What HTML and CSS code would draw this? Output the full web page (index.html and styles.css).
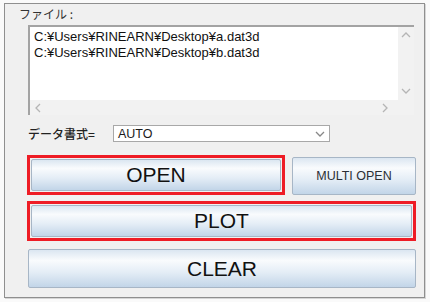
FILE: index.html
```html
<!DOCTYPE html>
<html lang="ja">

<head>
    <meta charset="UTF-8">
    <title>RINEARN Graph 3D - File</title>
    <link rel="stylesheet" href="styles.css">
</head>

<body>
    <div class="panel">
        <div class="title">ファイル :</div>

        <!-- ファイル一覧 -->
        <div class="list">
            <div class="list-body">
                <div class="list-item">C:¥Users¥RINEARN¥Desktop¥a.dat3d</div>
                <div class="list-item">C:¥Users¥RINEARN¥Desktop¥b.dat3d</div>
            </div>
            <div class="vscroll">
                <svg width="10" height="6" viewBox="0 0 10 6"><polyline points="1,5 5,1 9,5" /></svg>
                <svg width="10" height="6" viewBox="0 0 10 6"><polyline points="1,1 5,5 9,1" /></svg>
            </div>
            <div class="hscroll">
                <svg width="6" height="10" viewBox="0 0 6 10"><polyline points="5,1 1,5 5,9" /></svg>
                <svg width="6" height="10" viewBox="0 0 6 10"><polyline points="1,1 5,5 1,9" /></svg>
            </div>
            <div class="corner"></div>
        </div>

        <div class="format-row">
            <span class="format-label">データ書式=</span>
            <div class="combo">
                <span>AUTO</span>
                <svg width="10" height="6" viewBox="0 0 10 6"><polyline points="1,1 5,5 9,1" /></svg>
            </div>
        </div>

        <div class="row open-row">
            <div class="mark open-mark">
                <button class="btn btn-big">OPEN</button>
            </div>
            <button class="btn btn-small">MULTI OPEN</button>
        </div>

        <div class="mark plot-mark">
            <button class="btn btn-big">PLOT</button>
        </div>

        <button class="btn btn-big clear">CLEAR</button>
    </div>
</body>

</html>
```

FILE: styles.css
```css
* {
    margin: 0;
    padding: 0;
    box-sizing: border-box;
}

html, body {
    height: 100%;
    overflow: hidden;
}

body {
    background: #fafafa;
    font-family: "Liberation Sans", "Noto Sans CJK JP", Arial, sans-serif;
    color: #1a1a1a;
}

.panel {
    margin: 3px 0 0 4px;
    width: 421px;
    height: 295px;
    border: 1px solid #8f8f8f;
    box-shadow: 1px 1px 0 #d6d6d6;
    background: #f0f0f0;
    padding: 0 7px 0 22px;
}

.title {
    margin-left: -8px;
    height: 21px;
    line-height: 20px;
    font-size: 12px;
    font-family: "Noto Sans CJK JP", sans-serif;
    color: #333;
}

/* ファイル一覧 */
.list {
    margin-left: 1px;
    width: 386px;
    height: 90px;
    border-top: 2px solid #a3a3a3;
    border-left: 2px solid #a3a3a3;
    display: grid;
    grid-template-columns: 1fr 16px;
    grid-template-rows: 1fr 15px;
    background: #f2f2f2;
}

.list-body {
    background: #fff;
    padding: 2px 0 0 4px;
}

.list-item {
    font-size: 13px;
    line-height: 16px;
    color: #111;
}

.vscroll {
    display: flex;
    flex-direction: column;
    justify-content: space-between;
    align-items: center;
    padding: 5px 0 6px;
}

.hscroll {
    display: flex;
    justify-content: space-between;
    align-items: center;
    padding: 0 10px 0 5px;
}

.list svg polyline,
.combo svg polyline {
    fill: none;
    stroke: #b5b5b5;
    stroke-width: 1.3;
}

.format-row {
    margin-top: 10px;
    height: 17px;
    display: flex;
    align-items: center;
    padding-left: 1px;
}

.format-label {
    width: 85px;
    font-size: 12px;
    font-family: "Noto Sans CJK JP", sans-serif;
    font-weight: 500;
    color: #222;
}

.combo {
    width: 217px;
    height: 17px;
    border: 1px solid #a8a8a8;
    background: #fff;
    display: flex;
    align-items: center;
    justify-content: space-between;
    padding: 0 4px 0 4px;
    font-size: 12.5px;
}

.combo svg polyline {
    stroke: #888;
}

/* ボタン */
.row {
    display: flex;
}

.open-row {
    margin-top: 13px;
    height: 40px;
    gap: 7px;
}

.mark {
    border: 3px solid #ee1c25;
    padding: 1px;
    display: flex;
}

.open-mark {
    width: 258px;
    height: 40px;
}

.plot-mark {
    margin-top: 6px;
    width: 389px;
    height: 40px;
}

.btn {
    flex: 1;
    border: 1px solid #a7b6c6;
    border-radius: 2px;
    background: linear-gradient(#dbe6f1 0%, #f9fbfd 28%, #e4edf6 60%, #c2d5e8 100%);
    color: #111;
    font-family: "Liberation Sans", Arial, sans-serif;
}

.btn-big {
    font-size: 21px;
}

.btn-small {
    margin-top: 2px;
    width: 124px;
    height: 38px;
    flex: none;
    font-size: 12.5px;
    color: #2b2f36;
}

.clear {
    display: block;
    margin: 8px 0 0 1px;
    width: 388px;
    height: 39px;
}
```
